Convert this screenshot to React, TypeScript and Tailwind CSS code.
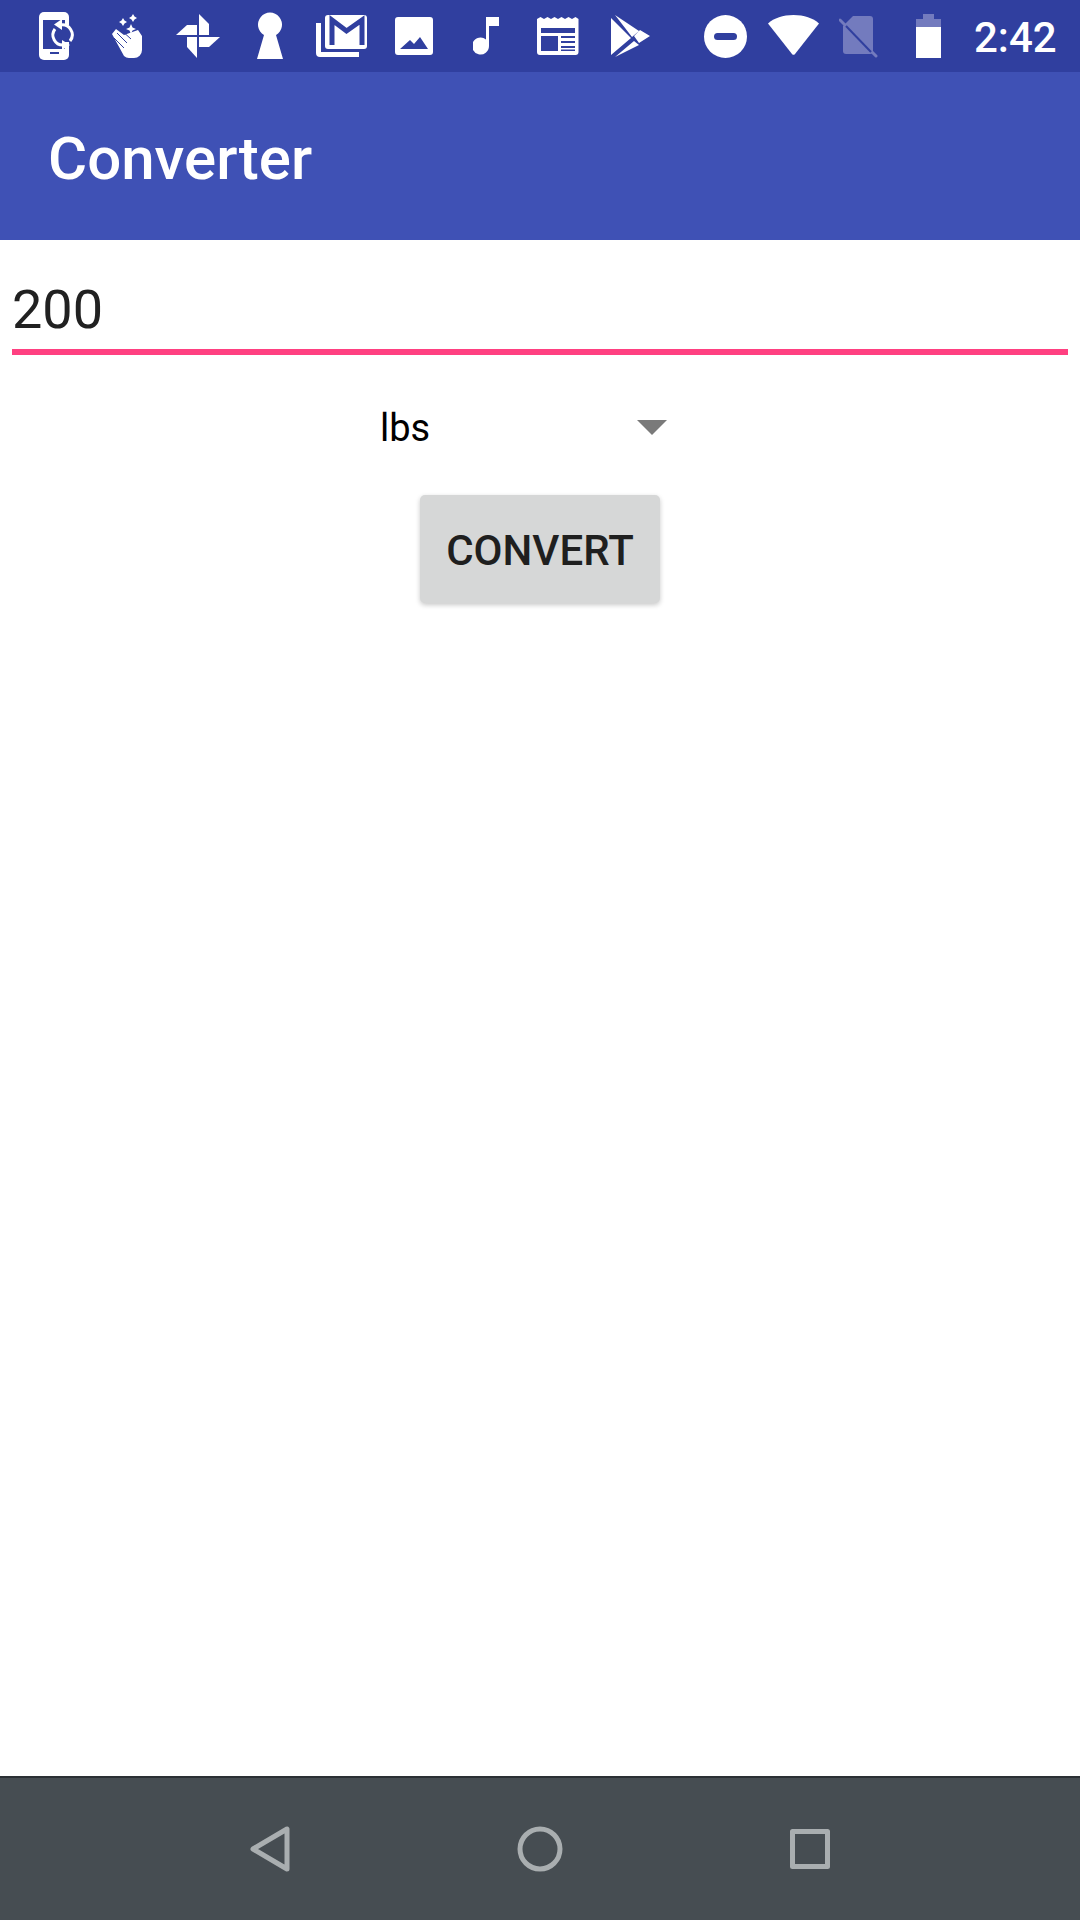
import React from 'react';

const FONT = { fontFamily: 'Roboto, sans-serif' };

// status bar glyphs, drawn in real pixels inside a box 72 tall
const StatusIcon: React.FC<{ w: number; children: React.ReactNode }> = ({ w, children }) => (
  <svg width={w} height={72} viewBox={`0 0 ${w} 72`} fill="#fff" className="shrink-0">
    {children}
  </svg>
);

const BG = '#303F9F';
const DIM = '#737BBE';

const LeftIcons = () => (
  <div className="flex">
    {/* phone + sync */}
    <StatusIcon w={36}>
      <rect x="0" y="12" width="30" height="48" rx="5" />
      <rect x="4" y="20" width="22" height="29" fill={BG} />
      <rect x="24" y="25" width="8" height="17" fill={BG} />
      <rect x="11" y="52" width="9" height="2" fill={BG} />
      <path d="M21 25A10 10 0 0 1 31 41" fill="none" stroke="#fff" strokeWidth="3" />
      <path d="M25 45A10 10 0 0 1 16 29" fill="none" stroke="#fff" strokeWidth="3" />
      <path d="M23 19V30L15 24.500zM23 40V50L31 45z" />
    </StatusIcon>
    <div className="w-[37px]" />
    {/* clap */}
    <StatusIcon w={30}>
      <path d="M0 34 4 29 12 35 26 30 30 36V50a8 8 0 0 1-8 8H17a8 8 0 0 1-5-2z" />
      <path d="M5 33 15 43M2 38 12 48M9 30 19 39" stroke={BG} strokeWidth="1" fill="none" />
      <path d="M11 18l1.500 2.500 2.500 1.500-2.500 1.500-1.500 2.500-1.500-2.500-2.500-1.500 2.500-1.500zM21 14l1.500 2.500 2.500 1.500-2.500 1.500-1.500 2.500-1.500-2.500-2.500-1.500 2.500-1.500zM19 24l1.500 3.500 3.500 1.500-3.500 1.500-1.500 3.500-1.500-3.500-3.500-1.500 3.500-1.500z" />
    </StatusIcon>
    <div className="w-[34px]" />
    {/* pinwheel */}
    <StatusIcon w={44}>
      <path d="M23 14 33 24V35H23z" />
      <path d="M0 35 11 25H21V35z" />
      <path d="M44 37 33 47H23V37z" />
      <path d="M21 58 11 47V37H21z" />
    </StatusIcon>
    <div className="w-[37px]" />
    {/* keyhole */}
    <StatusIcon w={26}>
      <path d="M7 35A12 12 0 1 1 19 35L26 59H0z" />
    </StatusIcon>
    <div className="w-[33px]" />
    {/* mail stack */}
    <StatusIcon w={53}>
      <path d="M0 23H5V52H43V57H4a4 4 0 0 1-4-4z" />
      <rect x="9" y="15" width="42" height="34" rx="3" />
      <path d="M16 45V20L30.500 31 46 20V45" fill="none" stroke={BG} strokeWidth="5" />
    </StatusIcon>
    <div className="w-[26px]" />
    {/* image */}
    <StatusIcon w={38}>
      <path fillRule="evenodd" d="M3 17h32a3 3 0 0 1 3 3v32a3 3 0 0 1-3 3H3a3 3 0 0 1-3-3V20a3 3 0 0 1 3-3zM5 49h28L25 37l-6 7-4-4z" />
    </StatusIcon>
    <div className="w-[40px]" />
    {/* music note */}
    <StatusIcon w={26}>
      <path d="M13 17H26V26H16V46A8.500 8.500 0 1 1 13 39.500z" />
    </StatusIcon>
    <div className="w-[38px]" />
    {/* newspaper */}
    <StatusIcon w={42}>
      <path fillRule="evenodd" d="M0 19l3.500-2 3.500 2 3.500-2 3.500 2 3.500-2 3.500 2 3.500-2 3.500 2 3.500-2 3.500 2 3.500-2 3 2v33a3 3 0 0 1-3 3H3a3 3 0 0 1-3-3zM4 28v5h34v-5zM4 36v15h17V36zM24 36v2h14v-2zM24 41v2h14v-2zM24 46v2h14v-2zM24 49.500v1.500h14v-1.500z" />
    </StatusIcon>
    <div className="w-[32px]" />
    {/* play store */}
    <StatusIcon w={39}>
      <path d="M4 15 28 31 21 37zM0 18 20 38 0 55zM4 57 23 41 28 45zM29 30 39 36 28 43 23 36z" />
    </StatusIcon>
  </div>
);

const RightIcons = () => (
  <div className="flex items-center">
    {/* do not disturb */}
    <svg width={43} height={72} viewBox="0 0 43 72" className="shrink-0">
      <circle cx="21.500" cy="36.500" r="21.500" fill="#fff" />
      <rect x="10" y="33" width="23" height="7" rx="3.500" fill={BG} />
    </svg>
    <div className="w-[21px]" />
    {/* wifi */}
    <StatusIcon w={51}>
      <path d="M25.500 15C36 15 45 18 51 23.500L27 54a2 2 0 0 1-3 0L0 23.500C6 18 15 15 25.500 15z" />
    </StatusIcon>
    <div className="w-[20px]" />
    {/* no sim */}
    <svg width={39} height={72} viewBox="0 0 39 72" className="shrink-0">
      <path d="M14 16H31a3 3 0 0 1 3 3V51a3 3 0 0 1-3 3H7a3 3 0 0 1-3-3V26z" fill={DIM} />
      <path d="M1 20 37 56" stroke={DIM} strokeWidth="3" strokeLinecap="round" />
      <path d="M7 26 32 52" stroke={BG} strokeWidth="2" />
    </svg>
    <div className="w-[38px]" />
    {/* battery */}
    <svg width={25} height={72} viewBox="0 0 25 72" className="shrink-0">
      <path d="M7 14H18V19H25V27H0V19H7z" fill={DIM} />
      <rect x="0" y="27" width="25" height="31" fill="#fff" />
    </svg>
    <div className="w-[33px]" />
    <span className="w-[81px] pt-[3px] text-[42px] font-medium leading-none whitespace-nowrap text-white" style={FONT}>2:42</span>
  </div>
);

const NavBar = () => (
  <div className="flex h-[144px] items-center justify-center gap-[227px] border-t-2 border-[#2b3034] bg-[#464d52]">
    <svg width={40} height={46} viewBox="0 0 40 46" fill="none" stroke="#a9aeb0" strokeWidth="5" strokeLinejoin="round">
      <path d="M37 3V43L3 23z" />
    </svg>
    <svg width={46} height={46} viewBox="0 0 46 46" fill="none" stroke="#a9aeb0" strokeWidth="5">
      <circle cx="23" cy="23" r="20" />
    </svg>
    <svg width={40} height={40} viewBox="0 0 40 40" fill="none" stroke="#a9aeb0" strokeWidth="5" strokeLinejoin="round">
      <rect x="2.500" y="2.500" width="35" height="35" />
    </svg>
  </div>
);

export default function App() {
  return (
    <div className="flex h-[1920px] w-[1080px] flex-col overflow-hidden bg-white" style={FONT}>
      <div className="flex h-[72px] items-center justify-between bg-[#303f9f] pl-[39px] pr-[25px]">
        <LeftIcons />
        <RightIcons />
      </div>

      <div className="flex h-[168px] items-center bg-[#3f51b5] pl-[48px] pt-[5px]">
        <h1 className="text-[60px] font-medium leading-none text-white">Converter</h1>
      </div>

      <div className="flex flex-1 flex-col">
        <div className="mx-[12px] mt-[36px] h-[79px] border-b-[6px] border-[#ff4081]">
          <span className="text-[54px] leading-[68px] text-[#212121]">200</span>
        </div>

        <div className="mt-[36px] flex h-[72px] items-center justify-center">
          <div className="flex w-[324px] items-center justify-between pl-[2px] pr-[35px]">
            <span className="pt-[2px] text-[38px] leading-none text-black">lbs</span>
            <div className="h-0 w-0 border-x-[15px] border-t-[15px] border-x-transparent border-t-[#7a7a7a]" />
          </div>
        </div>

        <div className="mt-[32px] flex justify-center">
          <button className="flex h-[108px] w-[240px] items-center justify-center rounded-[5px] bg-[#d6d7d7] pt-[2px] text-[42px] font-medium text-[#1f1f1f] shadow-[0_2px_5px_rgba(0,0,0,0.22)]">
            CONVERT
          </button>
        </div>
      </div>

      <NavBar />
    </div>
  );
}
